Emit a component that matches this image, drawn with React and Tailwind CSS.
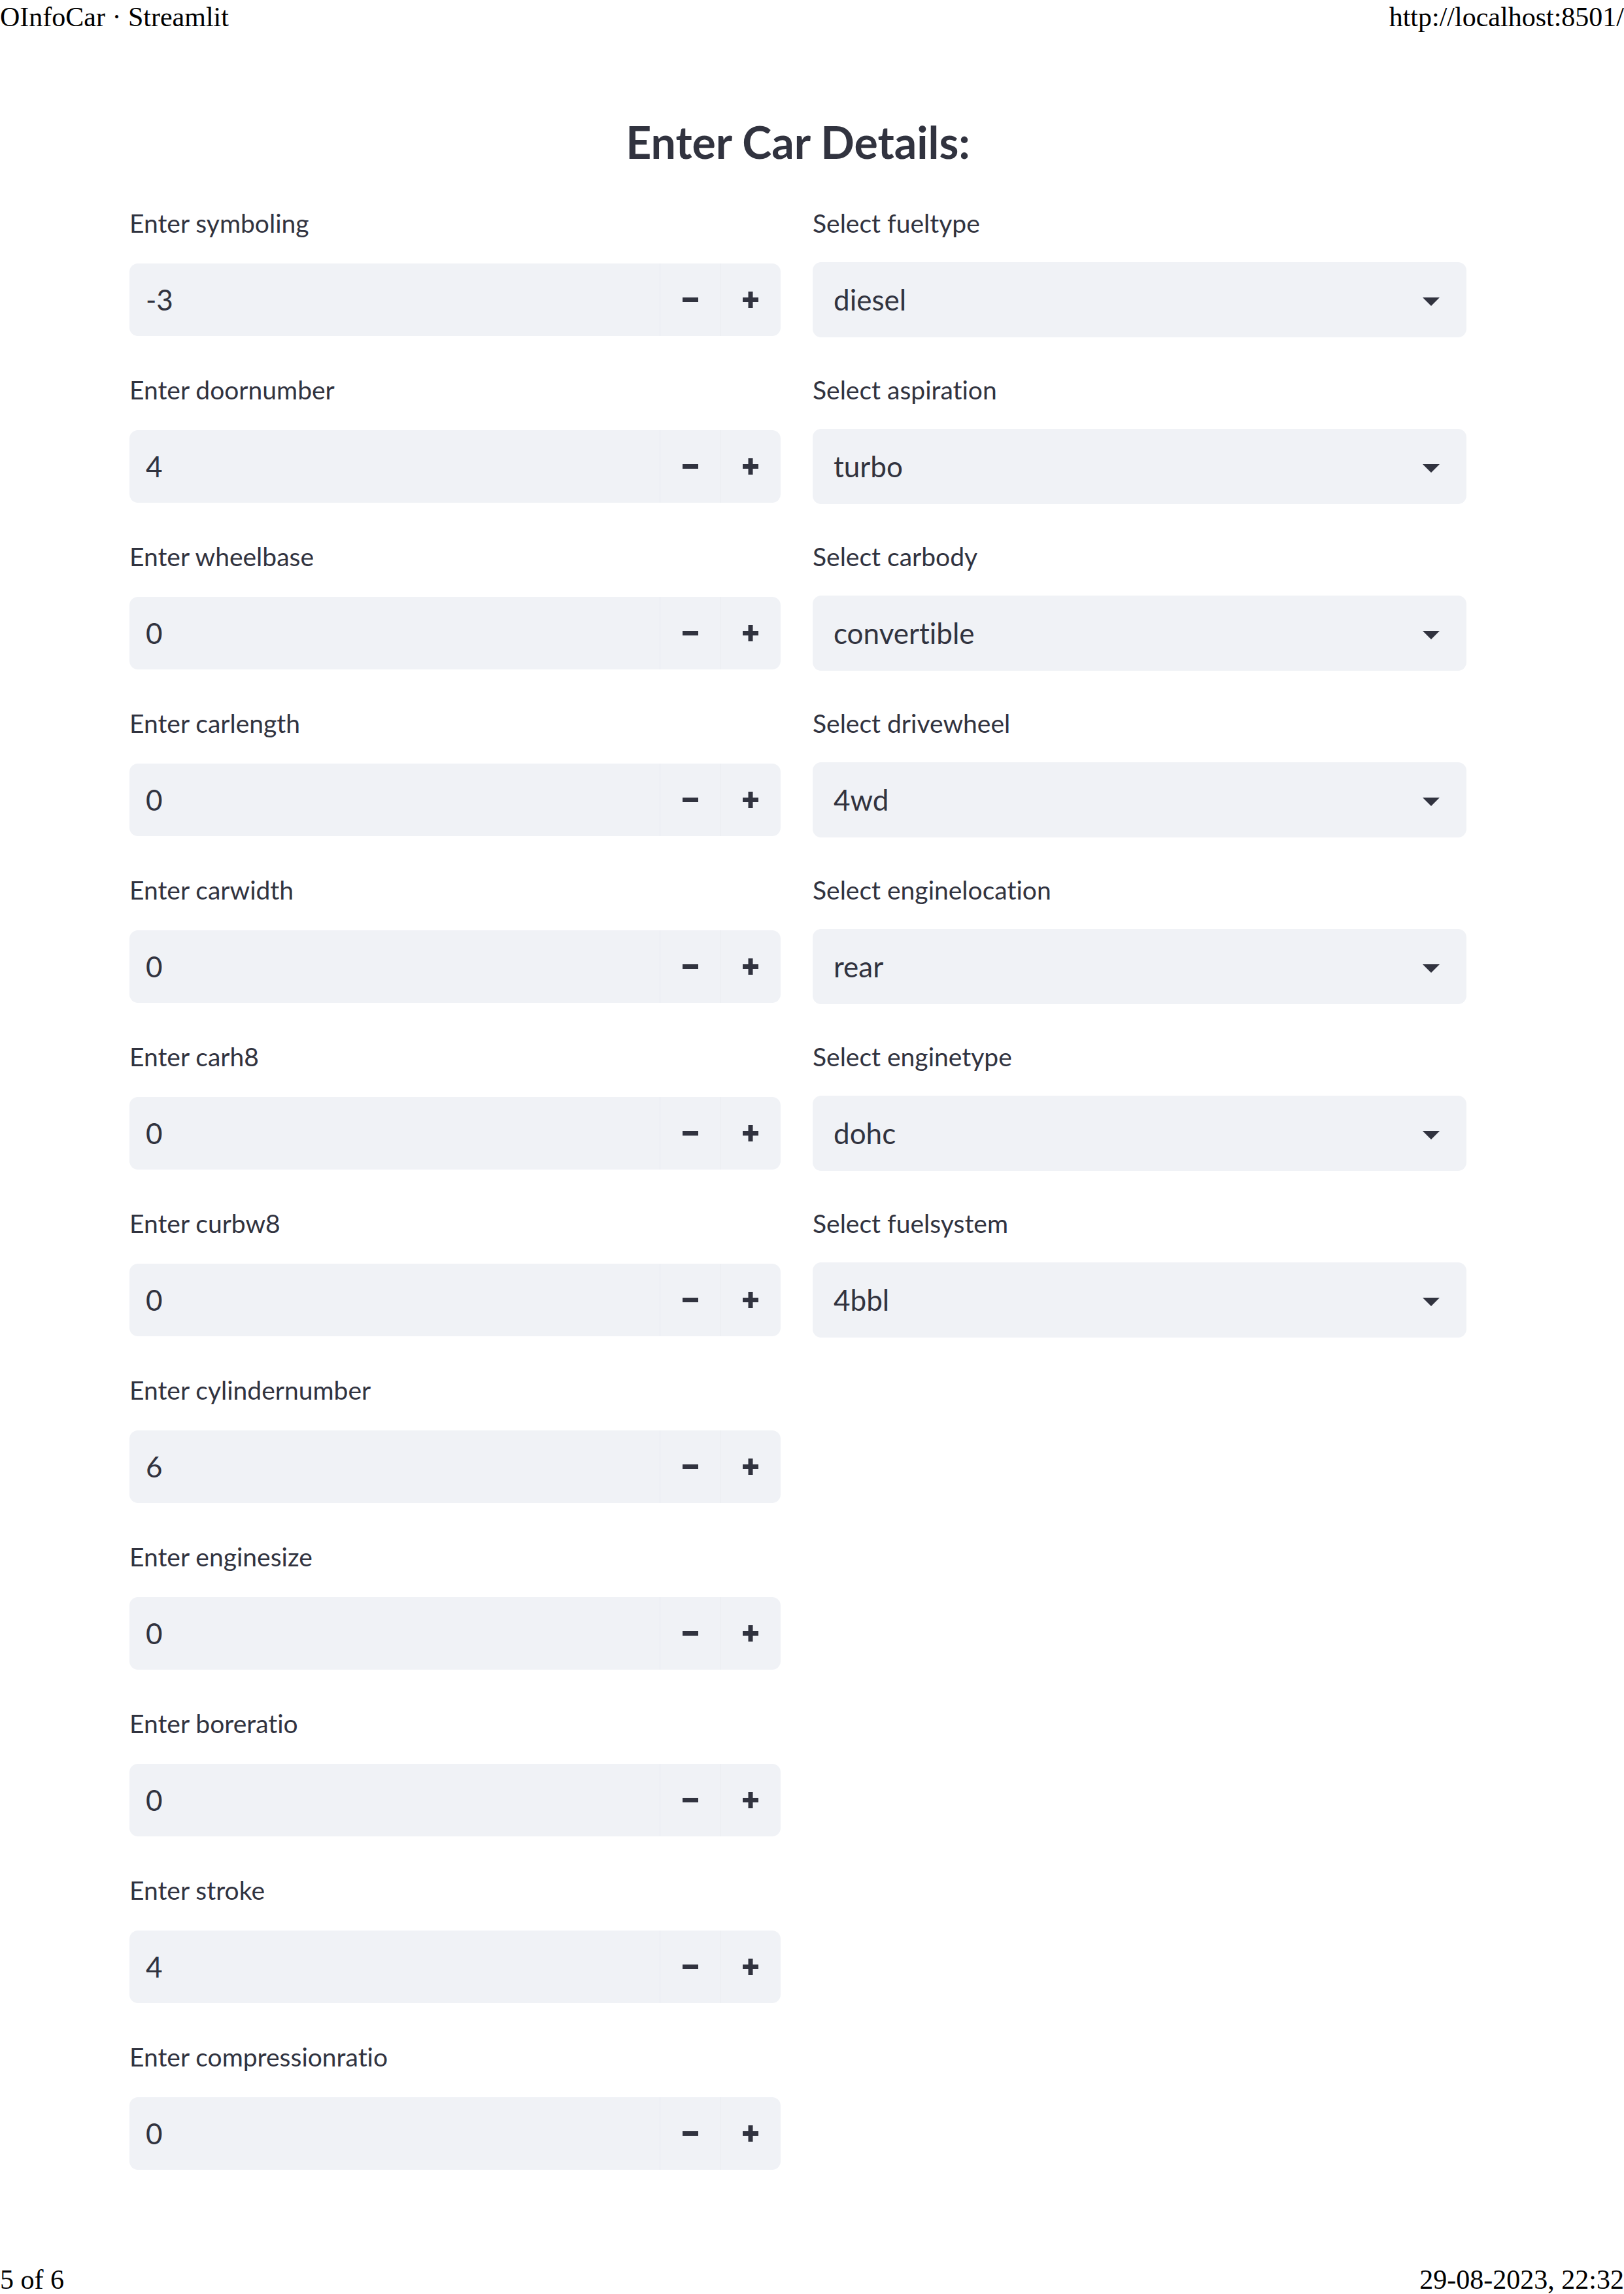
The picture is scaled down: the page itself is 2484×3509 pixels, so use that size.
import React from "react";

const angkaInput = [
  { label: "Enter symboling", nilai: "-3" },
  { label: "Enter doornumber", nilai: "4" },
  { label: "Enter wheelbase", nilai: "0" },
  { label: "Enter carlength", nilai: "0" },
  { label: "Enter carwidth", nilai: "0" },
  { label: "Enter carh8", nilai: "0" },
  { label: "Enter curbw8", nilai: "0" },
  { label: "Enter cylindernumber", nilai: "6" },
  { label: "Enter enginesize", nilai: "0" },
  { label: "Enter boreratio", nilai: "0" },
  { label: "Enter stroke", nilai: "4" },
  { label: "Enter compressionratio", nilai: "0" },
];

const pilihanInput = [
  { label: "Select fueltype", nilai: "diesel" },
  { label: "Select aspiration", nilai: "turbo" },
  { label: "Select carbody", nilai: "convertible" },
  { label: "Select drivewheel", nilai: "4wd" },
  { label: "Select enginelocation", nilai: "rear" },
  { label: "Select enginetype", nilai: "dohc" },
  { label: "Select fuelsystem", nilai: "4bbl" },
];

const IkonMinus = () => (
  <svg width="24" height="7" viewBox="0 0 24 7">
    <rect x="0" y="0" width="24" height="7" fill="#31333F" />
  </svg>
);

const IkonPlus = () => (
  <svg width="24" height="25" viewBox="0 0 24 25">
    <rect x="0" y="9" width="24" height="7" fill="#31333F" />
    <rect x="8.5" y="0" width="7" height="25" fill="#31333F" />
  </svg>
);

const Label = ({ children, className = "" }) => (
  <div className={`text-[39px] leading-[47px] text-[#31333F] ${className}`}>
    {children}
  </div>
);

const InputAngka = ({ label, nilai }) => (
  <div className="flex flex-col">
    <Label className="mb-[38px]">{label}</Label>
    <div className="flex h-[111px] items-stretch rounded-[13px] bg-[#F0F2F6]">
      <div className="flex flex-1 items-center pl-[25px] text-[44px] leading-[53px] text-[#31333F]">
        {nilai}
      </div>
      <button
        type="button"
        className="flex w-[92px] items-center justify-center border-l border-[#e9ebf0]"
      >
        <IkonMinus />
      </button>
      <button
        type="button"
        className="flex w-[93px] items-center justify-center border-l border-[#e9ebf0]"
      >
        <IkonPlus />
      </button>
    </div>
  </div>
);

const InputPilihan = ({ label, nilai }) => (
  <div className="flex flex-col">
    <Label className="mb-[36px]">{label}</Label>
    <div className="flex h-[115px] items-center justify-between rounded-[13px] bg-[#F0F2F6] pl-[32px] pr-[41px]">
      <span className="text-[44px] leading-[53px] text-[#31333F]">{nilai}</span>
      <svg width="26" height="13" viewBox="0 0 10 5" className="mt-[5px]">
        <path d="M0 0 L5 5 L10 0 Z" fill="#31333F" />
      </svg>
    </div>
  </div>
);

const App = () => {
  return (
    <div className="flex h-[3509px] w-[2484px] flex-col overflow-hidden bg-white">
      <div
        className="flex justify-between pt-[3px] text-[42px] leading-[47px] text-black"
        style={{ fontFamily: '"Liberation Serif", serif' }}
      >
        <span>OInfoCar · Streamlit</span>
        <span>http://localhost:8501/</span>
      </div>

      <div
        className="ml-[198px] w-[2045px] flex-1 pt-[126px] [font-variant-ligatures:none]"
        style={{ fontFamily: "Lato, sans-serif" }}
      >
        <h3 className="text-center text-[68px] font-bold leading-[82px] text-[#31333F]">
          Enter Car Details:
        </h3>

        <div className="mt-[60px] grid grid-cols-[996px_1000px] gap-x-[49px]">
          <div className="flex flex-col gap-[59px]">
            {angkaInput.map((item) => (
              <InputAngka key={item.label} label={item.label} nilai={item.nilai} />
            ))}
          </div>
          <div className="flex flex-col gap-[57px]">
            {pilihanInput.map((item) => (
              <InputPilihan key={item.label} label={item.label} nilai={item.nilai} />
            ))}
          </div>
        </div>
      </div>

      <div
        className="flex justify-between text-[42px] leading-[44px] text-black"
        style={{ fontFamily: '"Liberation Serif", serif' }}
      >
        <span>5 of 6</span>
        <span>29-08-2023, 22:32</span>
      </div>
    </div>
  );
};

export default App;
